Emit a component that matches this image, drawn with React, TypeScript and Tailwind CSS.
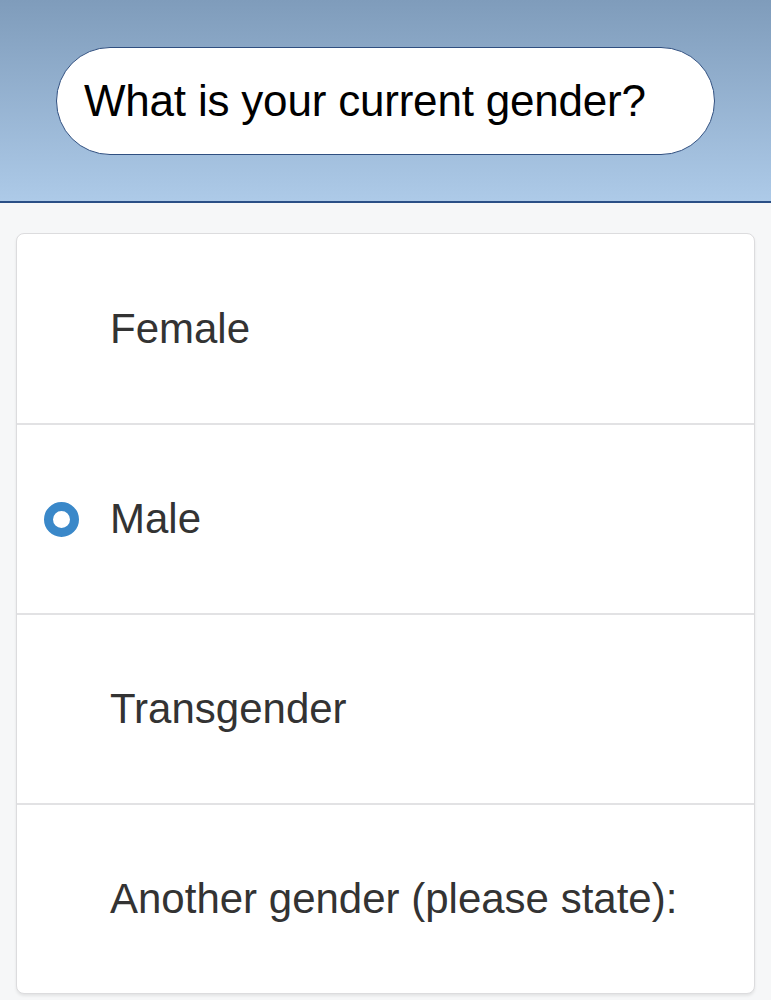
export default function App() {
  const options = ['Female', 'Male', 'Transgender', 'Another gender (please state):']
  const selected = 'Male'

  return (
    <div className="min-h-[1000px] bg-[#f6f7f8] font-['Liberation_Sans',Arial,sans-serif]">
      {/* Question header */}
      <div className="h-[203px] bg-gradient-to-b from-[#7f9cbb] to-[#adcae8] border-b-2 border-[#2a4f86] px-[56px] pt-[47px]">
        <div className="h-[108px] w-[659px] rounded-full border-[1.5px] border-[#2f4f80] bg-white flex items-center pl-[27px]">
          <h1 className="text-[44px] leading-none text-black tracking-[-0.2px]">What is your current gender?</h1>
        </div>
      </div>

      {/* Options */}
      <div className="px-4 pt-[30px]">
        <div className="rounded-lg border border-[#dcdcde] bg-white shadow-[0_2px_3px_rgba(0,0,0,0.08)] overflow-hidden">
          {options.map((opt, i) => (
            <div
              key={opt}
              className={`flex items-center ${i > 0 ? 'h-[190px] border-t-2 border-[#e2e2e4]' : 'h-[189px]'}`}
            >
              <div className="w-[93px] pl-[27px]">
                {opt === selected && (
                  <span className="block w-[35px] h-[35px] rounded-full border-[9.5px] border-[#3a88c9] bg-white" />
                )}
              </div>
              <span className="text-[42px] leading-none text-[#333]">{opt}</span>
            </div>
          ))}
        </div>
      </div>
    </div>
  )
}
